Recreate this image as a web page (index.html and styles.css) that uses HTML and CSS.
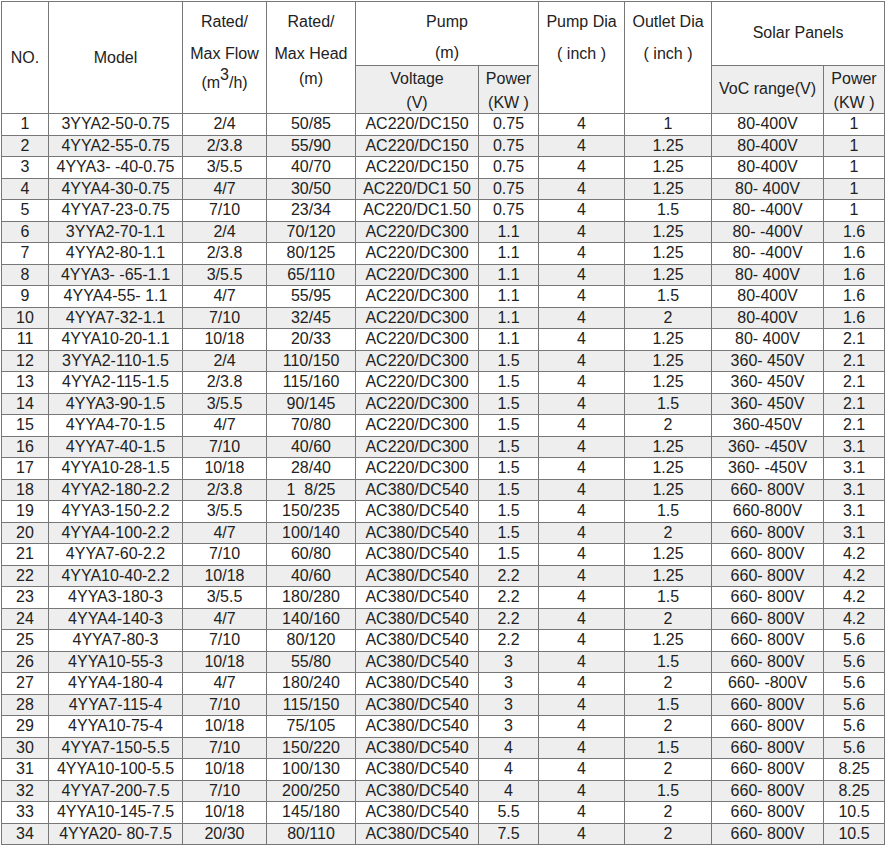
FILE: index.html
```html
<!DOCTYPE html>
<html lang="en">
<head>
<meta charset="utf-8">
<title>Solar Pump Table</title>
<link rel="stylesheet" href="styles.css">
</head>
<body>
<table class="spec">
<colgroup>
<col class="c1"><col class="c2"><col class="c3"><col class="c4"><col class="c5"><col class="c6"><col class="c7"><col class="c8"><col class="c9"><col class="c10">
</colgroup>
<thead>
<tr class="h1">
<th rowspan="2">NO.</th>
<th rowspan="2">Model</th>
<th rowspan="2" class="tall"><p>Rated/</p><p>Max Flow</p><p class="unit-flow">(m<sup>3</sup>/h)</p></th>
<th rowspan="2" class="tall"><p>Rated/</p><p>Max Head</p><p class="unit-head">(m)</p></th>
<th colspan="2" class="pump"><p>Pump</p><p>(m)</p></th>
<th rowspan="2" class="tall"><p>Pump Dia</p><p>( inch )</p></th>
<th rowspan="2" class="tall"><p>Outlet Dia</p><p>( inch )</p></th>
<th colspan="2" class="solar">Solar Panels</th>
</tr>
<tr class="h2">
<th class="sub"><p>Voltage</p><p>(V)</p></th>
<th class="sub"><p>Power</p><p>(KW )</p></th>
<th class="sub range">VoC range(V)</th>
<th class="sub"><p>Power</p><p>(KW )</p></th>
</tr>
</thead>
<tbody>
<tr><td>1</td><td>3YYA2-50-0.75</td><td>2/4</td><td>50/85</td><td>AC220/DC150</td><td>0.75</td><td>4</td><td>1</td><td>80-400V</td><td>1</td></tr>
<tr><td>2</td><td>4YYA2-55-0.75</td><td>2/3.8</td><td>55/90</td><td>AC220/DC150</td><td>0.75</td><td>4</td><td>1.25</td><td>80-400V</td><td>1</td></tr>
<tr><td>3</td><td>4YYA3- -40-0.75</td><td>3/5.5</td><td>40/70</td><td>AC220/DC150</td><td>0.75</td><td>4</td><td>1.25</td><td>80-400V</td><td>1</td></tr>
<tr><td>4</td><td>4YYA4-30-0.75</td><td>4/7</td><td>30/50</td><td>AC220/DC1 50</td><td>0.75</td><td>4</td><td>1.25</td><td>80- 400V</td><td>1</td></tr>
<tr><td>5</td><td>4YYA7-23-0.75</td><td>7/10</td><td>23/34</td><td>AC220/DC1.50</td><td>0.75</td><td>4</td><td>1.5</td><td>80- -400V</td><td>1</td></tr>
<tr><td>6</td><td>3YYA2-70-1.1</td><td>2/4</td><td>70/120</td><td>AC220/DC300</td><td>1.1</td><td>4</td><td>1.25</td><td>80- -400V</td><td>1.6</td></tr>
<tr><td>7</td><td>4YYA2-80-1.1</td><td>2/3.8</td><td>80/125</td><td>AC220/DC300</td><td>1.1</td><td>4</td><td>1.25</td><td>80- -400V</td><td>1.6</td></tr>
<tr><td>8</td><td>4YYA3- -65-1.1</td><td>3/5.5</td><td>65/110</td><td>AC220/DC300</td><td>1.1</td><td>4</td><td>1.25</td><td>80- 400V</td><td>1.6</td></tr>
<tr><td>9</td><td>4YYA4-55- 1.1</td><td>4/7</td><td>55/95</td><td>AC220/DC300</td><td>1.1</td><td>4</td><td>1.5</td><td>80-400V</td><td>1.6</td></tr>
<tr><td>10</td><td>4YYA7-32-1.1</td><td>7/10</td><td>32/45</td><td>AC220/DC300</td><td>1.1</td><td>4</td><td>2</td><td>80-400V</td><td>1.6</td></tr>
<tr><td>11</td><td>4YYA10-20-1.1</td><td>10/18</td><td>20/33</td><td>AC220/DC300</td><td>1.1</td><td>4</td><td>1.25</td><td>80- 400V</td><td>2.1</td></tr>
<tr><td>12</td><td>3YYA2-110-1.5</td><td>2/4</td><td>110/150</td><td>AC220/DC300</td><td>1.5</td><td>4</td><td>1.25</td><td>360- 450V</td><td>2.1</td></tr>
<tr><td>13</td><td>4YYA2-115-1.5</td><td>2/3.8</td><td>115/160</td><td>AC220/DC300</td><td>1.5</td><td>4</td><td>1.25</td><td>360- 450V</td><td>2.1</td></tr>
<tr><td>14</td><td>4YYA3-90-1.5</td><td>3/5.5</td><td>90/145</td><td>AC220/DC300</td><td>1.5</td><td>4</td><td>1.5</td><td>360- 450V</td><td>2.1</td></tr>
<tr><td>15</td><td>4YYA4-70-1.5</td><td>4/7</td><td>70/80</td><td>AC220/DC300</td><td>1.5</td><td>4</td><td>2</td><td>360-450V</td><td>2.1</td></tr>
<tr><td>16</td><td>4YYA7-40-1.5</td><td>7/10</td><td>40/60</td><td>AC220/DC300</td><td>1.5</td><td>4</td><td>1.25</td><td>360- -450V</td><td>3.1</td></tr>
<tr><td>17</td><td>4YYA10-28-1.5</td><td>10/18</td><td>28/40</td><td>AC220/DC300</td><td>1.5</td><td>4</td><td>1.25</td><td>360- -450V</td><td>3.1</td></tr>
<tr><td>18</td><td>4YYA2-180-2.2</td><td>2/3.8</td><td>1&nbsp; 8/25</td><td>AC380/DC540</td><td>1.5</td><td>4</td><td>1.25</td><td>660- 800V</td><td>3.1</td></tr>
<tr><td>19</td><td>4YYA3-150-2.2</td><td>3/5.5</td><td>150/235</td><td>AC380/DC540</td><td>1.5</td><td>4</td><td>1.5</td><td>660-800V</td><td>3.1</td></tr>
<tr><td>20</td><td>4YYA4-100-2.2</td><td>4/7</td><td>100/140</td><td>AC380/DC540</td><td>1.5</td><td>4</td><td>2</td><td>660- 800V</td><td>3.1</td></tr>
<tr><td>21</td><td>4YYA7-60-2.2</td><td>7/10</td><td>60/80</td><td>AC380/DC540</td><td>1.5</td><td>4</td><td>1.25</td><td>660- 800V</td><td>4.2</td></tr>
<tr><td>22</td><td>4YYA10-40-2.2</td><td>10/18</td><td>40/60</td><td>AC380/DC540</td><td>2.2</td><td>4</td><td>1.25</td><td>660- 800V</td><td>4.2</td></tr>
<tr><td>23</td><td>4YYA3-180-3</td><td>3/5.5</td><td>180/280</td><td>AC380/DC540</td><td>2.2</td><td>4</td><td>1.5</td><td>660- 800V</td><td>4.2</td></tr>
<tr><td>24</td><td>4YYA4-140-3</td><td>4/7</td><td>140/160</td><td>AC380/DC540</td><td>2.2</td><td>4</td><td>2</td><td>660- 800V</td><td>4.2</td></tr>
<tr><td>25</td><td>4YYA7-80-3</td><td>7/10</td><td>80/120</td><td>AC380/DC540</td><td>2.2</td><td>4</td><td>1.25</td><td>660- 800V</td><td>5.6</td></tr>
<tr><td>26</td><td>4YYA10-55-3</td><td>10/18</td><td>55/80</td><td>AC380/DC540</td><td>3</td><td>4</td><td>1.5</td><td>660- 800V</td><td>5.6</td></tr>
<tr><td>27</td><td>4YYA4-180-4</td><td>4/7</td><td>180/240</td><td>AC380/DC540</td><td>3</td><td>4</td><td>2</td><td>660- -800V</td><td>5.6</td></tr>
<tr><td>28</td><td>4YYA7-115-4</td><td>7/10</td><td>115/150</td><td>AC380/DC540</td><td>3</td><td>4</td><td>1.5</td><td>660- 800V</td><td>5.6</td></tr>
<tr><td>29</td><td>4YYA10-75-4</td><td>10/18</td><td>75/105</td><td>AC380/DC540</td><td>3</td><td>4</td><td>2</td><td>660- 800V</td><td>5.6</td></tr>
<tr><td>30</td><td>4YYA7-150-5.5</td><td>7/10</td><td>150/220</td><td>AC380/DC540</td><td>4</td><td>4</td><td>1.5</td><td>660- 800V</td><td>5.6</td></tr>
<tr><td>31</td><td>4YYA10-100-5.5</td><td>10/18</td><td>100/130</td><td>AC380/DC540</td><td>4</td><td>4</td><td>2</td><td>660- 800V</td><td>8.25</td></tr>
<tr><td>32</td><td>4YYA7-200-7.5</td><td>7/10</td><td>200/250</td><td>AC380/DC540</td><td>4</td><td>4</td><td>1.5</td><td>660- 800V</td><td>8.25</td></tr>
<tr><td>33</td><td>4YYA10-145-7.5</td><td>10/18</td><td>145/180</td><td>AC380/DC540</td><td>5.5</td><td>4</td><td>2</td><td>660- 800V</td><td>10.5</td></tr>
<tr><td>34</td><td>4YYA20- 80-7.5</td><td>20/30</td><td>80/110</td><td>AC380/DC540</td><td>7.5</td><td>4</td><td>2</td><td>660- 800V</td><td>10.5</td></tr>
</tbody>
</table>
</body>
</html>
```
FILE: styles.css
```css
html, body {
  margin: 0;
  padding: 0;
  background: #fff;
}
body {
  padding: 1px;
  font-family: "Liberation Sans", Arial, sans-serif;
  font-size: 16px;
  color: #222;
}
.spec {
  border-collapse: collapse;
  table-layout: fixed;
  width: 883px;
  font-size: 16px;
}
.c1 { width: 47px; }
.c2 { width: 134px; }
.c3 { width: 84px; }
.c4 { width: 89px; }
.c5 { width: 123px; }
.c6 { width: 60px; }
.c7 { width: 86px; }
.c8 { width: 87px; }
.c9 { width: 112px; }
.c10 { width: 61px; }
th, td {
  border: 1px solid #777;
  padding: 0;
  text-align: center;
  vertical-align: middle;
  font-weight: 400;
  white-space: pre-wrap;
}
td {
  height: 20.5px;
  line-height: 18px;
}
tbody tr:nth-child(even) td {
  background: #eee;
}
p {
  margin: 0;
}
.h1 { height: 63px; }
.h2 { height: 47px; }
.tall {
  line-height: 32px;
  vertical-align: top;
  padding-top: 4px;
}
.pump {
  vertical-align: top;
  padding-top: 4px;
  line-height: 32px;
}
.pump p + p {
  margin-top: 3px;
  line-height: 24px;
}
.solar {
  padding-bottom: 2px;
}
.unit-flow {
  line-height: 26px;
}
.unit-head {
  line-height: 18px;
}
.sub {
  background: #eee;
  line-height: 24px;
}
.sub p {
  padding-top: 1px;
}
.sub p + p {
  padding-top: 0;
  margin-top: 1px;
  line-height: 21px;
}
.range {
  padding-bottom: 2px;
}
sup {
  font-size: 16px;
  line-height: 0;
  vertical-align: 8px;
}
```
